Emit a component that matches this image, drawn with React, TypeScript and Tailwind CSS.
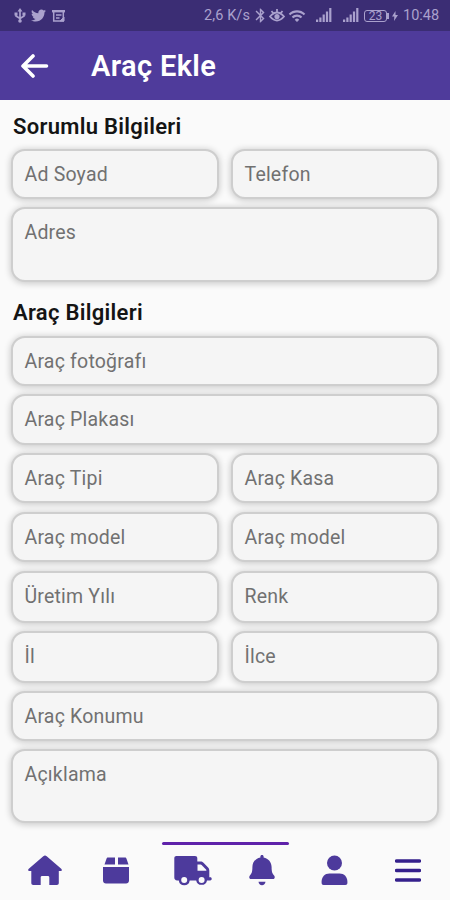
import { clsx } from "clsx"
import { FaTwitter } from "react-icons/fa"
import { MdBluetooth, MdWifi } from "react-icons/md"

const ownerRows = [
    { height: "h-[50px] mb-[8px]", fields: ["Ad Soyad", "Telefon"] },
    { height: "h-[75px]", fields: ["Adres"] },
]

const vehicleRows = [
    { height: "h-[50px] mb-[8px]", fields: ["Araç fotoğrafı"] },
    { height: "h-[51px] mb-[8px]", fields: ["Araç Plakası"] },
    { height: "h-[50px] mb-[9px]", fields: ["Araç Tipi", "Araç Kasa"] },
    { height: "h-[50px] mb-[9px]", fields: ["Araç model", "Araç model"] },
    { height: "h-[52px] mb-[8px]", fields: ["Üretim Yılı", "Renk"] },
    { height: "h-[52px] mb-[8px]", fields: ["İl", "İlce"] },
    { height: "h-[50px] mb-[8px]", fields: ["Araç Konumu"] },
    { height: "h-[74px]", fields: ["Açıklama"] },
]

function Field({ label }: { label: string }) {
    return (
        <div className="flex-1 rounded-[14px] border-2 border-[#cecece] bg-[#f5f5f5] px-[11.5px] pt-[11.500px] text-[19.5px] leading-[24px] tracking-[0.2px] text-[#717171] shadow-[0_1px_6px_1px_rgba(0,0,0,0.18)]">
            {label}
        </div>
    )
}

function FieldRows({ rows }: { rows: typeof ownerRows }) {
    return (
        <div className="flex flex-col">
            {rows.map((row, index) => (
                <div key={index} className={clsx("flex gap-[12px]", row.height)}>
                    {row.fields.map((label, i) => (
                        <Field key={i} label={label} />
                    ))}
                </div>
            ))}
        </div>
    )
}

function Signal() {
    return (
        <svg width="16" height="15" viewBox="0 0 16 15" fill="currentColor">
            <path d="M0 11.500h2.200V14H0zM3.300 9.500h2.200V14H3.300zM6.600 6.500h2.200V14H6.600zM9.900 3.500h2.200V14H9.900zM13.200 0h2.200v14h-2.200z" />
        </svg>
    )
}

function StatusBar() {
    return (
        <div className="flex h-[31px] items-center bg-[#3b2d74] text-[#aaa1cd]">
            <svg className="ml-[14px]" width="12" height="15" viewBox="0 0 12 15" fill="currentColor">
                <path d="M6 0l2.500 3.500h-5z" />
                <circle cx="6" cy="13" r="1.800" />
                <path d="M6 2v11M2 5.500V8l4 2.500L10 8V5.500" fill="none" stroke="currentColor" strokeWidth="1.700" />
                <path d="M.5 4.500h3v3h-3zM8.500 4.500h3v3h-3z" />
            </svg>
            <FaTwitter className="ml-[5px]" size={15} />
            <svg className="ml-[6px]" width="13" height="12" viewBox="0 0 13 12" fill="none" stroke="currentColor">
                <path d="M0 1.200h13" strokeWidth="2.400" />
                <path d="M1.700 1v10h9.600V1M4 5h5.500M4 8h3.500" strokeWidth="1.500" />
                <path d="M8 11l4-4v4z" fill="currentColor" />
            </svg>
            <span className="ml-[139px] w-[47px] whitespace-nowrap text-[14.500px] tracking-[0.1px]">2,6 K/s</span>
            <MdBluetooth className="ml-[1px]" size={17} />
            <svg width="16" height="14" viewBox="0 0 16 14" fill="none" stroke="currentColor" strokeWidth="1.800">
                <path d="M1 7.500Q8-.5 15 7.500Q8 15.500 1 7.500zM8 0v4M2.500 2l2 2.500M13.500 2l-2 2.500" />
                <circle cx="8" cy="7.500" r="2.600" fill="currentColor" stroke="none" />
            </svg>
            <MdWifi className="ml-[3px]" size={18} />
            <span className="ml-[10px]"><Signal /></span>
            <span className="ml-[11px]"><Signal /></span>
            <span className="ml-[5px] flex h-[12px] w-[23px] items-center justify-center rounded-[3px] border border-current text-[12px] leading-none">23</span>
            <span className="h-[6px] w-[2px] bg-current" />
            <svg className="ml-[3px]" width="6" height="10" viewBox="0 0 6 10" fill="currentColor">
                <path d="M3.500 0L0 5.500h2.300L2 10l4-6H3.500z" />
            </svg>
            <span className="ml-[5px] text-[14.500px]">10:48</span>
        </div>
    )
}

function BottomNav() {
    return (
        <nav className="flex h-[58px] shrink-0 items-start">
            <svg className="ml-[28px] mt-[13px]" width="34" height="31" viewBox="0 0 34 31" fill="#4d3a9c">
                <path d="M17 .5c.7 0 1.200.3 1.700.7l14.500 12.600c1.300 1.200.5 2.200-.6 2.200h-1.800v12c0 1.300-.7 2-2 2h-7.500v-7.500c0-1-.6-1.500-1.500-1.500h-5.600c-.9 0-1.500.5-1.500 1.500V30H5.300c-1.300 0-2-.7-2-2V16H1.500c-1.300 0-1.800-1.200-.7-2.200L15.300 1.200c.5-.4 1-.7 1.700-.7z" />
            </svg>
            <svg className="ml-[41px] mt-[15px]" width="27" height="28" viewBox="0 0 27 28" fill="#4d3a9c">
                <path d="M5 .5h7V7.500H1.500L3.500 1.700C3.800.9 4.200.5 5 .5zM15 .5h7c.8 0 1.200.4 1.500 1.200l2 5.800H15zM0 10h26v13.500c0 1.700-1.300 3-3 3H3c-1.700 0-3-1.300-3-3z" />
            </svg>
            <div className="ml-[32px] w-[127px]">
                <div className="h-[3px] rounded-sm bg-[#5f22aa]" />
                <div className="flex items-start pt-[10px]">
                    <svg className="ml-[12px]" width="38" height="32" viewBox="0 0 38 32">
                        <path d="M2.500 1H21c1.400 0 2.300.9 2.300 2.300v3.200h3.300c1.200 0 2 .4 2.900 1.300l4.600 4.700c.8.8 1.200 1.700 1.200 2.900v6.800h1c.9 0 1.400.7 1.400 1.600s-.6 1.600-1.500 1.600H33a5.500 5.500 0 0 1-10.800 0h-6.500a5.500 5.500 0 0 1-10.900 0H3.200C1.300 25.400.3 24.300.3 22.500V3.200C.3 1.800 1.200 1 2.500 1z" fill="#4d3a9c" />
                        <path d="M23.500 9.500h3c.5 0 .8.200 1.100.5l4.400 4.600c.3.400.4.700.4 1.200h-8.900z" fill="#fafafa" />
                        <circle cx="10.200" cy="25" r="3" fill="#fafafa" />
                        <circle cx="27.600" cy="25" r="3" fill="#fafafa" />
                    </svg>
                    <svg className="ml-[36px]" width="28" height="31" viewBox="0 0 28 31" fill="#4d3a9c">
                        <path d="M14 0c1 0 1.600.7 1.600 1.600v.8c4.800.8 8 4.800 8 9.700 0 5.400 1 6.800 2.700 8.700.9 1.200.4 3.200-1.300 3.200H3c-1.700 0-2.200-2-1.300-3.200 1.700-1.900 2.700-3.300 2.700-8.700 0-4.900 3.200-8.900 8-9.700v-.8C12.400.7 13 0 14 0zM10.500 26.800h7c-.3 2-1.600 3.400-3.500 3.400s-3.200-1.400-3.500-3.400z" />
                    </svg>
                </div>
            </div>
            <svg className="ml-[32px] mt-[13px]" width="27" height="31" viewBox="0 0 27 31" fill="#4d3a9c">
                <circle cx="13.500" cy="8" r="7.500" />
                <path d="M8.500 18.500h10c4.700 0 7.900 3.500 7.900 8.200v1.300c0 1.300-.8 2-2 2H2.600c-1.200 0-2-.7-2-2v-1.300c0-4.700 3.200-8.200 7.900-8.200z" />
            </svg>
            <svg className="ml-[47px] mt-[16px]" width="26" height="24" viewBox="0 0 26 24" stroke="#35208c" strokeWidth="3.400" strokeLinecap="round">
                <path d="M1.500 3h23M1.500 12.500h23M1.500 22h23" />
            </svg>
        </nav>
    )
}

export default function App() {
    return (
        <div className="flex h-[900px] w-[450px] flex-col overflow-hidden bg-[#fafafa] font-['Roboto','Noto_Sans',sans-serif]">
            <StatusBar />
            <header className="flex h-[69px] items-center bg-[#4f3b9b] text-white">
                <svg className="ml-[21px]" width="28" height="24" viewBox="0 0 28 24" fill="none" stroke="currentColor" strokeWidth="3.600" strokeLinecap="round" strokeLinejoin="round">
                    <path d="M12 2L2 12l10 10M2.500 12H25.500" />
                </svg>
                <h1 className="ml-[42px] mt-px text-[29px] font-semibold leading-none tracking-[0.35px]">Araç Ekle</h1>
            </header>
            <main className="flex flex-1 flex-col px-[11px]">
                <h2 className="mb-[6px] ml-[2px] mt-[11px] text-[22px] font-semibold leading-[32px] tracking-[0.3px] text-[#141414]">Sorumlu Bilgileri</h2>
                <FieldRows rows={ownerRows} />
                <h2 className="mb-[7px] ml-[2px] mt-[15px] text-[22px] font-semibold leading-[32px] tracking-[0.3px] text-[#141414]">Araç Bilgileri</h2>
                <FieldRows rows={vehicleRows} />
            </main>
            <BottomNav />
        </div>
    )
}
